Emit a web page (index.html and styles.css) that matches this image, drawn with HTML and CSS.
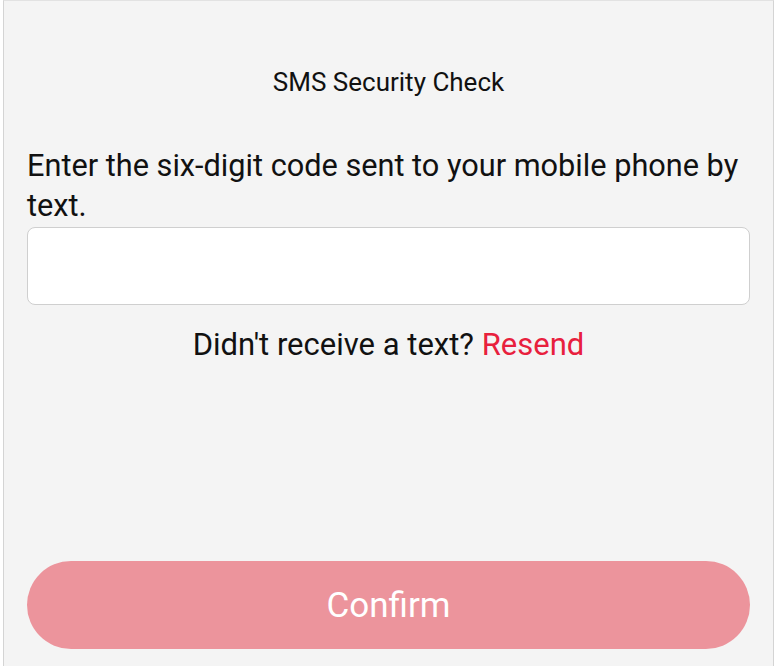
FILE: index.html
```html
<!DOCTYPE html>
<html lang="en">
<head>
<meta charset="utf-8">
<title>SMS Security Check</title>
<link rel="stylesheet" href="styles.css">
</head>
<body>
<div class="frame">
  <h1 class="title">SMS Security Check</h1>
  <p class="prompt">Enter the six-digit code sent to your mobile phone by text.</p>
  <input class="code" type="text" inputmode="numeric" maxlength="6" aria-label="Verification code">
  <p class="resend">Didn't receive a text? <a class="resend-link" href="#">Resend</a></p>
  <div class="spacer"></div>
  <button class="confirm" type="button">Confirm</button>
</div>
</body>
</html>
```
FILE: styles.css
```css
html, body {
  margin: 0;
  padding: 0;
  background: #ffffff;
  height: 100%;
}
body {
  font-family: Roboto, "Liberation Sans", Arial, sans-serif;
  color: #111111;
}
.frame {
  box-sizing: border-box;
  margin-left: 3px;
  width: 771px;
  min-height: 666px;
  background: #f4f4f4;
  border-top: 1px solid #e2e2e2;
  border-left: 1px solid #d4d4d4;
  border-right: 1px solid #d4d4d4;
  padding: 66px 23px 0 23px;
  display: flex;
  flex-direction: column;
}
.title {
  margin: 0;
  font-size: 26px;
  line-height: 30px;
  font-weight: 400;
  text-align: center;
}
.prompt {
  margin: 49px 0 0 0;
  font-size: 30.7px;
  line-height: 40px;
}
.code {
  box-sizing: border-box;
  display: block;
  width: 100%;
  height: 78px;
  margin: 1px 0 0 0;
  border: 1px solid #cfcfcf;
  border-radius: 8px;
  background: #ffffff;
  font: inherit;
  font-size: 30.7px;
  padding: 0 16px;
  outline: none;
}
.resend {
  margin: 20px 0 0 0;
  font-size: 31px;
  line-height: 40px;
  text-align: center;
}
.resend-link {
  color: #e8203d;
  text-decoration: none;
}
.spacer {
  height: 196px;
}
.confirm {
  box-sizing: border-box;
  width: 100%;
  height: 88px;
  border: none;
  border-radius: 44px;
  background: #ec949c;
  color: #ffffff;
  font-family: Roboto, "Liberation Sans", Arial, sans-serif;
  font-size: 35px;
  padding: 0;
}
```
